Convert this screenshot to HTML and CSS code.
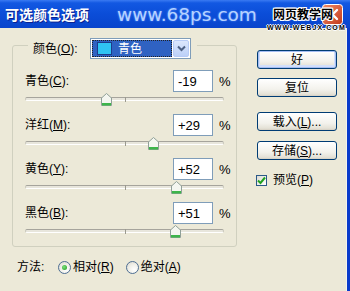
FILE: index.html
```html
<!DOCTYPE html>
<html>
<head>
<meta charset="utf-8">
<link rel="stylesheet" href="styles.css">
</head>
<body>
<div class="window">
  <div class="titlebar">
    <span class="title">可选颜色选项</span>
    <span class="watermark">www.68ps.com</span>
    <span class="close">
      <svg width="21" height="21" viewBox="0 0 21 21">
        <defs>
          <linearGradient id="cg" x1="0" y1="0" x2="1" y2="1">
            <stop offset="0" stop-color="#F08A68"/>
            <stop offset="1" stop-color="#C23A1A"/>
          </linearGradient>
        </defs>
        <rect x="0.5" y="0.5" width="20" height="20" rx="3" fill="url(#cg)" stroke="#fff"/>
        <path d="M6 6 L15 15 M15 6 L6 15" stroke="#fff" stroke-width="2.4" stroke-linecap="round"/>
      </svg>
    </span>
    <div class="logo">
      <span class="logo-cn">网页教学网</span>
      <span class="logo-en">WWW.WEBJX.COM</span>
    </div>
  </div>
  <div class="content">
    <div class="main">
      <fieldset class="group">
        <legend class="group-head">
          <span class="head-label">颜色(<u>O</u>):</span>
          <span class="select">
            <span class="select-value"><span class="swatch"></span><span class="select-text">青色</span></span>
            <span class="select-btn">
              <svg width="9" height="7" viewBox="0 0 9 7"><path d="M1 1.5 L4.5 5 L8 1.5" fill="none" stroke="#4D6185" stroke-width="2"/></svg>
            </span>
          </span>
        </legend>
        <div class="controls">
          <div class="control">
            <div class="row"><span class="name">青色(<u>C</u>):</span><span class="num">-19</span><span class="pct">%</span></div>
            <div class="slider"><span class="track"></span><span class="tick"></span><span class="thumb" style="left:40.5%"><svg width="11" height="13" viewBox="0 0 11 13"><polygon points="0.5,12.5 0.5,5 5.5,0.5 10.5,5 10.5,12.5" fill="#F4F6F0" stroke="#90A098"/><rect x="1" y="10" width="9" height="2.5" fill="#3DB54A"/></svg></span></div>
          </div>
          <div class="control">
            <div class="row"><span class="name">洋红(<u>M</u>):</span><span class="num">+29</span><span class="pct">%</span></div>
            <div class="slider"><span class="track"></span><span class="tick"></span><span class="thumb" style="left:64.5%"><svg width="11" height="13" viewBox="0 0 11 13"><polygon points="0.5,12.5 0.5,5 5.5,0.5 10.5,5 10.5,12.5" fill="#F4F6F0" stroke="#90A098"/><rect x="1" y="10" width="9" height="2.5" fill="#3DB54A"/></svg></span></div>
          </div>
          <div class="control">
            <div class="row"><span class="name">黄色(<u>Y</u>):</span><span class="num">+52</span><span class="pct">%</span></div>
            <div class="slider"><span class="track"></span><span class="tick"></span><span class="thumb" style="left:76%"><svg width="11" height="13" viewBox="0 0 11 13"><polygon points="0.5,12.5 0.5,5 5.5,0.5 10.5,5 10.5,12.5" fill="#F4F6F0" stroke="#90A098"/><rect x="1" y="10" width="9" height="2.5" fill="#3DB54A"/></svg></span></div>
          </div>
          <div class="control last">
            <div class="row"><span class="name">黑色(<u>B</u>):</span><span class="num">+51</span><span class="pct">%</span></div>
            <div class="slider"><span class="track"></span><span class="tick"></span><span class="thumb" style="left:75.5%"><svg width="11" height="13" viewBox="0 0 11 13"><polygon points="0.5,12.5 0.5,5 5.5,0.5 10.5,5 10.5,12.5" fill="#F4F6F0" stroke="#90A098"/><rect x="1" y="10" width="9" height="2.5" fill="#3DB54A"/></svg></span></div>
          </div>
        </div>
      </fieldset>
      <div class="method">
        <span class="method-label">方法:</span>
        <span class="option"><span class="radio checked"></span><span>相对(<u>R</u>)</span></span>
        <span class="option second"><span class="radio"></span><span>绝对(<u>A</u>)</span></span>
      </div>
    </div>
    <div class="side">
      <span class="btn default">好</span>
      <span class="btn reset">复位</span>
      <span class="btn load">载入(<u>L</u>)...</span>
      <span class="btn save">存储(<u>S</u>)...</span>
      <span class="check-row">
        <span class="checkbox"><svg width="9" height="9" viewBox="0 0 9 9"><path d="M1 4.5 L3.5 7 L8 1.5" fill="none" stroke="#21A121" stroke-width="2"/></svg></span>
        <span>预览(<u>P</u>)</span>
      </span>
    </div>
  </div>
</div>
</body>
</html>
```

FILE: styles.css
```css
html, body {
  margin: 0;
  padding: 0;
}
body {
  width: 350px;
  height: 291px;
  overflow: hidden;
  background: #ECE9D8;
  font-family: "Liberation Sans", "Noto Sans CJK SC", sans-serif;
  font-size: 12px;
  color: #000;
}
u {
  text-decoration: underline;
  text-underline-offset: 1px;
}
.window {
  width: 350px;
  height: 291px;
  box-sizing: border-box;
  border-right: 3px solid #0A3BCB;
  box-shadow: inset -1px 0 0 #F4F3EE;
  display: flex;
  flex-direction: column;
}
.titlebar {
  position: relative;
  height: 28px;
  flex: none;
  display: flex;
  align-items: center;
  background: linear-gradient(#3A7AF2 0, #1258E2 3px, #0B4DD8 50%, #0944CC 100%);
  margin-right: -3px;
  padding-right: 3px;
}
.title {
  margin-left: 5px;
  width: 84px;
  color: #fff;
  font-family: "Noto Sans CJK SC", sans-serif;
  font-weight: bold;
  font-size: 14px;
  line-height: 16px;
  white-space: nowrap;
  text-shadow: 1px 1px 0 #0A2290;
}
.watermark {
  margin-left: 28px;
  font-family: "DejaVu Sans", sans-serif;
  font-size: 18.5px;
  line-height: 20px;
  margin-top: 1px;
  color: #B6D2FF;
  text-shadow: 0 0 2px #5F9AFF;
}
.close {
  margin-left: auto;
  margin-right: 4px;
  width: 21px;
  height: 21px;
  display: flex;
}
.logo {
  position: absolute;
  left: 267px;
  top: 6px;
  display: flex;
  flex-direction: column;
}
.logo-cn {
  margin-left: 6px;
  font-family: "Noto Sans CJK SC", sans-serif;
  font-size: 12px;
  line-height: 15px;
  font-weight: bold;
  color: #000;
  text-shadow: 1px 0 #fff, -1px 0 #fff, 0 1px #fff, 0 -1px #fff, 1px 1px #fff, -1px -1px #fff, 1px -1px #fff, -1px 1px #fff;
}
.logo-en {
  margin-top: 3px;
  font-family: "Liberation Sans", sans-serif;
  font-size: 7px;
  line-height: 7px;
  font-weight: bold;
  letter-spacing: 1.1px;
  color: #000;
  text-shadow: 1px 0 #fff, -1px 0 #fff, 0 1px #fff, 0 -1px #fff;
}
.content {
  flex: 1;
  display: flex;
  padding-left: 12px;
}
.main {
  padding-top: 4px;
  display: flex;
  flex-direction: column;
}
.group {
  margin: 0;
  padding: 0 12px 7px 12px;
  width: 199px;
  border: 1px solid #D0D0BF;
  border-radius: 3px;
  min-inline-size: 0;
}
.group-head {
  margin-left: 3px;
  padding: 6px 6px 0 5px;
  display: flex;
  align-items: center;
}
.head-label {
  width: 57px;
  line-height: 14px;
}
.select {
  width: 101px;
  height: 21px;
  box-sizing: border-box;
  border: 1px solid #7F9DB9;
  background: #fff;
  display: flex;
  align-items: center;
  padding: 1px;
}
.select-value {
  flex: 1;
  height: 17px;
  box-sizing: border-box;
  background: #2F62C2;
  outline: 1px dotted #222;
  outline-offset: -1px;
  display: flex;
  align-items: center;
  padding-left: 5px;
}
.swatch {
  width: 15px;
  height: 13px;
  box-sizing: border-box;
  background: #2FC4F2;
  border: 1px solid #1D3C8C;
}
.select-text {
  margin-left: 6px;
  color: #fff;
  line-height: 14px;
}
.select-btn {
  width: 16px;
  height: 17px;
  margin-left: 1px;
  box-sizing: border-box;
  border: 1px solid #B7CBF6;
  border-radius: 2px;
  background: linear-gradient(#DCE7FD, #BCD0F8);
  display: flex;
  align-items: center;
  justify-content: center;
}
.controls {
  padding-top: 11px;
}
.row {
  height: 22px;
  display: flex;
  align-items: center;
  margin-right: -8px;
}
.name {
  flex: 1;
  line-height: 14px;
}
.num {
  width: 40px;
  height: 22px;
  box-sizing: border-box;
  border: 1px solid #7F9DB9;
  background: #fff;
  padding-left: 4px;
  display: flex;
  align-items: center;
  font-size: 13px;
}
.pct {
  margin-left: 6px;
  width: 13px;
  font-size: 13px;
}
.slider {
  position: relative;
  height: 14px;
  margin: 1px 0 7px;
}
.control.last .slider {
  margin-bottom: 0;
}
.track {
  position: absolute;
  left: 0;
  right: 0;
  top: 4px;
  height: 2px;
  border-top: 1px solid #A6A49C;
  border-bottom: 1px solid #FFFFFF;
  border-left: 1px solid #C8C6BC;
  border-right: 1px solid #C8C6BC;
  border-radius: 2px;
  background: #E8E6DC;
}
.tick {
  position: absolute;
  left: 50%;
  top: 4px;
  width: 1px;
  height: 5px;
  background: #9A998F;
}
.thumb {
  position: absolute;
  top: 0;
  width: 11px;
  height: 13px;
  margin-left: -5px;
  display: flex;
}
.method {
  margin-top: 12px;
  padding-left: 5px;
  height: 16px;
  display: flex;
  align-items: center;
}
.method-label {
  width: 41px;
  line-height: 14px;
}
.option {
  display: flex;
  align-items: center;
  gap: 2px;
  line-height: 14px;
}
.option.second {
  margin-left: 12px;
}
.radio {
  width: 13px;
  height: 13px;
  box-sizing: border-box;
  border-radius: 50%;
  border: 1px solid #4E6E93;
  background: radial-gradient(circle at 65% 70%, #FFFFFF 0, #F0EFE8 50%, #D6D4CA 100%);
  display: flex;
  align-items: center;
  justify-content: center;
}
.radio.checked::after {
  content: "";
  width: 5px;
  height: 5px;
  border-radius: 50%;
  background: radial-gradient(circle at 40% 40%, #7CE07C, #1D9A1D);
}
.side {
  margin-left: 20px;
  padding-top: 22px;
  width: 80px;
  display: flex;
  flex-direction: column;
}
.btn {
  height: 19px;
  box-sizing: border-box;
  border: 1px solid #003C74;
  border-radius: 3px;
  background: linear-gradient(#FFFFFF, #F3F2EC 60%, #E4E1D6 90%, #D4CFC2);
  display: flex;
  align-items: center;
  justify-content: center;
  line-height: 14px;
}
.btn.default {
  box-shadow: inset 0 0 0 1px #A4BDF3, inset 0 -1px 0 2px #D2DFFB;
}
.btn.reset {
  margin-top: 9px;
}
.btn.load {
  margin-top: 15px;
}
.btn.save {
  margin-top: 10px;
}
.check-row {
  margin-top: 13px;
  display: flex;
  align-items: center;
  line-height: 14px;
}
.checkbox {
  width: 11px;
  height: 11px;
  box-sizing: border-box;
  border: 1px solid #2B5987;
  background: linear-gradient(135deg, #DCDBD2, #FFFFFF);
  display: flex;
  align-items: center;
  justify-content: center;
  margin-left: -1px;
  margin-right: 6px;
}
```
